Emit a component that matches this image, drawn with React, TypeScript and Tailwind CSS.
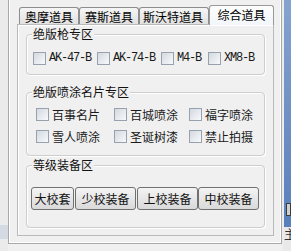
import React from "react";

function Cb({ label, latin }: { label: string; latin?: boolean }) {
  return (
    <div className="flex items-center">
      <span className="block w-[13px] h-[13px] shrink-0 border border-[#98a2ae] bg-linear-to-br from-[#d3d9e0] to-[#f8f9fb]" />
      {latin ? (
        <span className="ml-[3px] font-['Liberation_Mono',monospace] text-[12px] tracking-[-1.2px] leading-[13px] text-[#1a1a1a]">
          {label}
        </span>
      ) : (
        <span className="ml-[3px] leading-[13px] text-[#1a1a1a]">{label}</span>
      )}
    </div>
  );
}

function Group({
  title,
  h,
  className,
  children,
}: {
  title: string;
  h: string;
  className?: string;
  children: React.ReactNode;
}) {
  return (
    <div
      className={`relative rounded-[4px] border border-[#cdcdcd] shadow-[inset_1px_1px_0_#ffffff,1px_1px_0_#ffffff] ${h} ${className ?? ""}`}
    >
      <span className="absolute left-[5px] top-[-7px] bg-[#f0f0f0] px-[1px] leading-[12px] text-[#111]">
        {title}
      </span>
      {children}
    </div>
  );
}

function Btn({ label, w }: { label: string; w: string }) {
  return (
    <div
      className={`${w} h-[23px] flex items-center justify-center rounded-[3px] border border-[#707070] bg-linear-to-b from-[#f4f4f4] to-[#d9d9d9] text-[#111] leading-[12px]`}
    >
      {label}
    </div>
  );
}

export default function App() {
  return (
    <div className="flex w-[291px] h-[251px] overflow-hidden bg-[#f0f0f0] font-['Noto_Sans_CJK_SC',sans-serif] text-[12px] leading-[12px] text-black">
      {/* left strip */}
      <div className="w-[8px] h-full flex flex-col">
        <div className="flex-1 bg-[#ebebeb]" />
        <div className="h-[14px] bg-[#d5dbe3]" />
        <div className="h-[12px] bg-[#ebebeb]" />
      </div>

      {/* main frame */}
      <div className="w-[274px] h-[244px] border-l border-r border-b border-[#a9a9a9] shadow-[inset_1px_0_0_#ffffff,inset_-1px_-1px_0_#ffffff] pl-[8px] pr-[7px] pt-[5px] pb-[7px] flex flex-col">
        {/* tab header */}
        <div className="flex items-end h-[19px] pl-[2px]">
          <div className="w-[60px] h-[17px] flex items-center justify-center rounded-t-[3px] border border-b-0 border-[#8d8d8d] bg-linear-to-b from-[#f5f5f5] to-[#e1e1e1] pt-[1px]">
            奥摩道具
          </div>
          <div className="w-[60px] h-[17px] flex items-center justify-center rounded-t-[3px] border border-b-0 border-[#8d8d8d] bg-linear-to-b from-[#f5f5f5] to-[#e1e1e1] pt-[1px]">
            赛斯道具
          </div>
          <div className="w-[70px] h-[17px] flex items-center justify-center rounded-t-[3px] border border-b-0 border-[#8d8d8d] bg-linear-to-b from-[#f5f5f5] to-[#e1e1e1] pt-[1px] pr-[2px]">
            斯沃特道具
          </div>
          <div className="relative z-10 w-[65px] h-[20px] mb-[-1px] flex items-center justify-center rounded-t-[3px] border border-b-0 border-[#9a9a9a] bg-linear-to-b from-[#fdfdfd] to-[#f2f6fa] pb-[1px]">
            综合道具
          </div>
        </div>

        {/* tab panel */}
        <div className="w-[257px] h-[212px] border border-[#b9b9b9] shadow-[inset_1px_1px_0_#ffffff] bg-[#f0f0f0] pl-[8px] pr-[8px] pt-[9px] pb-[7px] flex flex-col">
          <Group title="绝版枪专区" h="h-[41px]">
            <div className="flex items-center pt-[17px] pl-[6px]">
              <div className="w-[64px]">
                <Cb label="AK-47-B" latin />
              </div>
              <div className="w-[64px]">
                <Cb label="AK-74-B" latin />
              </div>
              <div className="w-[47px]">
                <Cb label="M4-B" latin />
              </div>
              <div>
                <Cb label="XM8-B" latin />
              </div>
            </div>
          </Group>

          <Group title="绝版喷涂名片专区" h="h-[64px]" className="mt-[17px]">
            <div className="flex flex-col gap-[9px] pt-[15px] pl-[9px]">
              <div className="flex items-center">
                <div className="w-[78px]">
                  <Cb label="百事名片" />
                </div>
                <div className="w-[75px]">
                  <Cb label="百城喷涂" />
                </div>
                <div>
                  <Cb label="福字喷涂" />
                </div>
              </div>
              <div className="flex items-center">
                <div className="w-[78px]">
                  <Cb label="雪人喷涂" />
                </div>
                <div className="w-[75px]">
                  <Cb label="圣诞树漆" />
                </div>
                <div>
                  <Cb label="禁止拍摄" />
                </div>
              </div>
            </div>
          </Group>

          <Group title="等级装备区" h="h-[63px]" className="mt-[9px]">
            <div className="flex items-center pt-[21px] pl-[4px]">
              <Btn label="大校套" w="w-[43px]" />
              <Btn label="少校装备" w="w-[61px] ml-[1px]" />
              <Btn label="上校装备" w="w-[61px] ml-[1px]" />
              <Btn label="中校装备" w="w-[61px]" />
            </div>
          </Group>
        </div>
      </div>

      {/* gap */}
      <div className="w-[2px] h-full bg-[#ececec]" />

      {/* blue strip */}
      <div className="w-[7px] h-full flex flex-col">
        <div className="h-[202px] bg-linear-to-b from-[#86a3d0] to-[#5f83bc]" />
        <div className="h-[14px] bg-[#5f83bc] pl-[2px] flex items-center">
          <div className="w-full h-[13px] border border-[#3c3c3c] bg-[#cfcfcf]" />
        </div>
        <div className="h-[11px] bg-[#5a80ba]" />
        <div className="flex-1 bg-[#e9e9e9] overflow-hidden text-[12px] leading-[12px] text-[#333] pt-[1px]">
          主
        </div>
      </div>
    </div>
  );
}
